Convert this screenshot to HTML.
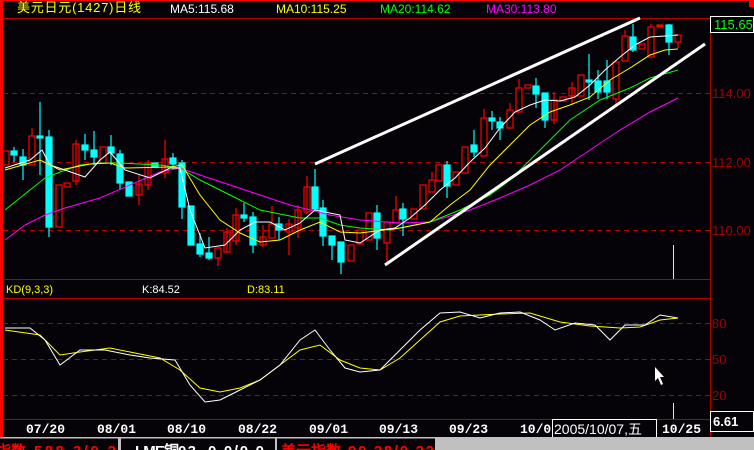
<!DOCTYPE html>
<html><head><meta charset="utf-8"><style>
html,body{margin:0;padding:0;background:#050308;width:754px;height:450px;overflow:hidden}
svg{display:block}
text{font-family:"Liberation Sans","WenQuanYi Zen Hei",sans-serif}
.d{font-family:"Liberation Mono","DejaVu Sans Mono",monospace;font-weight:bold;font-size:13px;fill:#fff}
.ax{fill:#a00000;font-size:13px}
</style></head><body>
<svg width="754" height="450" viewBox="0 0 754 450" xmlns="http://www.w3.org/2000/svg">
<rect width="754" height="450" fill="#050308"/>
<rect x="0" y="0" width="3" height="437" fill="#ff0000"/>
<rect x="0" y="0" width="754" height="1" fill="#ff0000"/>
<rect x="749" y="0" width="5" height="7" fill="#ff0000"/>
<line x1="3" y1="18.5" x2="754" y2="18.5" stroke="#b00000"/>
<line x1="710.5" y1="18" x2="710.5" y2="437" stroke="#b00000"/>
<line x1="3" y1="279.5" x2="710" y2="279.5" stroke="#b00000"/>
<line x1="3" y1="298.5" x2="710" y2="298.5" stroke="#b00000"/>
<line x1="3" y1="419.5" x2="710" y2="419.5" stroke="#b00000"/>
<g stroke="#b00000" stroke-dasharray="5,4">
<line x1="3" y1="93.5" x2="710" y2="93.5"/><line x1="3" y1="162.5" x2="710" y2="162.5"/><line x1="3" y1="230.5" x2="710" y2="230.5"/>
<line x1="3" y1="323.5" x2="710" y2="323.5"/><line x1="3" y1="359.5" x2="710" y2="359.5"/><line x1="3" y1="395.5" x2="710" y2="395.5"/>
</g>
<text x="17" y="12" fill="#ffff00" font-size="13" textLength="124" font-family="'Liberation Sans','WenQuanYi Zen Hei',sans-serif">美元日元(1427)日线</text>
<text x="170" y="13" fill="#ffffff" font-size="12">MA5:115.68</text>
<text x="276" y="13" fill="#ffff00" font-size="12">MA10:115.25</text>
<text x="380" y="13" fill="#00ff00" font-size="12">MA20:114.62</text>
<text x="486" y="13" fill="#ff00ff" font-size="12">MA30:113.80</text>
<rect x="710.5" y="16.5" width="43" height="16" fill="#050308" stroke="#fff"/>
<text x="714" y="29" fill="#00ff00" font-size="13">115.65</text>
<text x="712" y="98" class="ax">114.00</text>
<text x="712" y="167" class="ax">112.00</text>
<text x="712" y="235" class="ax">110.00</text>
<text x="712" y="328" class="ax">80</text>
<text x="712" y="364" class="ax">50</text>
<text x="712" y="400" class="ax">20</text>
<rect x="710.5" y="411.5" width="43" height="20" fill="#050308" stroke="#fff"/>
<text x="713" y="426" fill="#fff" font-size="13" font-family="'Liberation Mono',monospace" font-weight="bold">6.61</text>
<text x="6" y="293" fill="#ffff00" font-size="11">KD(9,3,3)</text>
<text x="142" y="293" fill="#fff" font-size="11">K:84.52</text>
<text x="247" y="293" fill="#ffff00" font-size="11">D:83.11</text>
<g stroke-width="1.2">
<g stroke="#ff0000" fill="#050308">
<rect x="3" y="151" width="6" height="14"/><rect x="29" y="136" width="6" height="29"/><line x1="32" y1="128" x2="32" y2="136"/>
<rect x="56" y="185" width="6" height="42"/><rect x="64" y="183" width="6" height="4"/><rect x="73" y="144" width="6" height="37"/><line x1="76" y1="140" x2="76" y2="185"/>
<rect x="100" y="147" width="6" height="16"/><rect x="136" y="184" width="6" height="11"/><line x1="139" y1="175" x2="139" y2="205"/>
<rect x="145" y="163" width="6" height="22"/><line x1="148" y1="160" x2="148" y2="190"/><rect x="162" y="159" width="6" height="14"/><line x1="165" y1="140" x2="165" y2="178"/>
<rect x="215" y="248" width="6" height="10"/><line x1="218" y1="258" x2="218" y2="266"/><rect x="224" y="232" width="6" height="20"/><line x1="227" y1="228" x2="227" y2="253"/>
<rect x="233" y="215" width="6" height="26"/><line x1="236" y1="208" x2="236" y2="245"/>
<rect x="260" y="237" width="6" height="8"/><line x1="263" y1="225" x2="263" y2="247"/><rect x="269" y="224" width="6" height="14"/><line x1="272" y1="206" x2="272" y2="224"/>
<rect x="286" y="224" width="6" height="8"/><line x1="289" y1="219" x2="289" y2="255"/><rect x="295" y="210" width="6" height="18"/><line x1="298" y1="205" x2="298" y2="238"/>
<rect x="304" y="187" width="6" height="25"/><line x1="307" y1="176" x2="307" y2="214"/>
<rect x="348" y="245" width="6" height="16"/><rect x="357" y="230" width="6" height="14"/><rect x="366" y="213" width="6" height="27"/>
<rect x="384" y="222" width="6" height="21"/><line x1="387" y1="243" x2="387" y2="265"/><rect x="393" y="210" width="6" height="13"/><line x1="396" y1="196" x2="396" y2="210"/>
<rect x="411" y="209" width="6" height="10"/><rect x="420" y="185" width="6" height="24"/><rect x="429" y="180" width="6" height="12"/><line x1="432" y1="172" x2="432" y2="180"/>
<rect x="436" y="165" width="6" height="16"/><rect x="453" y="172" width="6" height="13"/><rect x="462" y="147" width="6" height="26"/>
<rect x="481" y="118" width="6" height="38"/><line x1="484" y1="109" x2="484" y2="118"/><rect x="507" y="110" width="6" height="18"/><line x1="510" y1="103" x2="510" y2="110"/>
<rect x="516" y="88" width="6" height="24"/><line x1="519" y1="79" x2="519" y2="88"/><rect x="525" y="85" width="6" height="3"/>
<rect x="551" y="100" width="6" height="20"/><line x1="554" y1="92" x2="554" y2="124"/><rect x="560" y="97" width="6" height="4"/>
<rect x="569" y="88" width="6" height="8"/><line x1="572" y1="82" x2="572" y2="105"/><rect x="578" y="75" width="6" height="21"/>
<rect x="613" y="62" width="6" height="37"/><line x1="616" y1="99" x2="616" y2="105"/><rect x="622" y="36" width="6" height="25"/><line x1="625" y1="30" x2="625" y2="36"/>
<rect x="639" y="44" width="6" height="5"/><rect x="648" y="27" width="6" height="30"/><line x1="651" y1="24" x2="651" y2="27"/>
<rect x="657" y="25" width="6" height="2" fill="#ff0000"/><rect x="675" y="35" width="6" height="7"/><line x1="678" y1="42" x2="678" y2="48"/>
</g>
<g stroke="#00ffff" fill="#00ffff">
<line x1="14" y1="147" x2="14" y2="162"/><rect x="11" y="151" width="6" height="4"/>
<line x1="23" y1="149" x2="23" y2="180"/><rect x="20" y="157" width="6" height="8"/>
<line x1="40" y1="102" x2="40" y2="175"/><rect x="37" y="136" width="6" height="2"/>
<line x1="49" y1="130" x2="49" y2="237"/><rect x="46" y="137" width="6" height="90"/>
<line x1="85" y1="134" x2="85" y2="160"/><rect x="82" y="145" width="6" height="5"/>
<line x1="94" y1="131" x2="94" y2="165"/><rect x="91" y="150" width="6" height="7"/>
<line x1="111" y1="135" x2="111" y2="165"/><rect x="108" y="147" width="6" height="6"/>
<line x1="120" y1="150" x2="120" y2="190"/><rect x="117" y="154" width="6" height="29"/>
<rect x="126" y="182" width="6" height="14"/>
<rect x="152" y="163" width="6" height="4"/>
<line x1="173" y1="153" x2="173" y2="170"/><rect x="170" y="158" width="6" height="6"/>
<line x1="182" y1="160" x2="182" y2="219"/><rect x="179" y="163" width="6" height="44"/>
<rect x="188" y="206" width="6" height="39"/>
<line x1="200" y1="233" x2="200" y2="257"/><rect x="197" y="244" width="6" height="10"/>
<line x1="209" y1="237" x2="209" y2="260"/><rect x="206" y="253" width="6" height="5"/>
<line x1="244" y1="203" x2="244" y2="222"/><rect x="241" y="215" width="6" height="3"/>
<line x1="253" y1="212" x2="253" y2="253"/><rect x="250" y="217" width="6" height="28"/>
<line x1="279" y1="217" x2="279" y2="240"/><rect x="276" y="224" width="6" height="6"/>
<line x1="315" y1="169" x2="315" y2="210"/><rect x="312" y="187" width="6" height="22"/>
<line x1="323" y1="200" x2="323" y2="246"/><rect x="320" y="208" width="6" height="28"/>
<line x1="332" y1="236" x2="332" y2="260"/><rect x="329" y="236" width="6" height="9"/>
<line x1="341" y1="242" x2="341" y2="274"/><rect x="338" y="242" width="6" height="20"/>
<line x1="377" y1="205" x2="377" y2="250"/><rect x="374" y="213" width="6" height="25"/>
<line x1="403" y1="203" x2="403" y2="236"/><rect x="400" y="209" width="6" height="10"/>
<line x1="447" y1="161" x2="447" y2="198"/><rect x="444" y="165" width="6" height="21"/>
<line x1="474" y1="130" x2="474" y2="157"/><rect x="471" y="145" width="6" height="7"/>
<line x1="492" y1="111" x2="492" y2="130"/><rect x="489" y="118" width="6" height="3"/>
<line x1="500" y1="117" x2="500" y2="140"/><rect x="497" y="122" width="6" height="6"/>
<line x1="536" y1="78" x2="536" y2="108"/><rect x="533" y="86" width="6" height="8"/>
<line x1="545" y1="93" x2="545" y2="128"/><rect x="542" y="93" width="6" height="27"/>
<line x1="589" y1="54" x2="589" y2="100"/><rect x="586" y="80" width="6" height="2"/>
<line x1="598" y1="70" x2="598" y2="99"/><rect x="595" y="81" width="6" height="11"/>
<line x1="607" y1="60" x2="607" y2="99"/><rect x="604" y="81" width="6" height="11"/>
<line x1="633" y1="24" x2="633" y2="52"/><rect x="630" y="37" width="6" height="13"/>
<line x1="669" y1="24" x2="669" y2="55"/><rect x="666" y="25" width="6" height="17"/>
</g>
</g>
<g fill="none" stroke-width="1">
<polyline stroke="#ff00ff" points="5,240 25,225 45,215 65,208 100,198 130,185 160,172 180,168 200,175 230,185 260,195 290,205 330,215 360,220 400,223 430,222 470,210 500,198 530,185 560,170 590,150 620,130 650,112 678,98"/>
<polyline stroke="#00ff00" points="5,210 30,190 45,178 60,172 80,165 100,163 120,163 160,165 180,168 200,180 220,190 240,200 260,210 300,218 320,218 340,225 360,228 390,230 430,222 460,210 490,195 510,180 530,160 550,140 570,120 600,100 630,88 650,78 678,70"/>
<polyline stroke="#ffff00" points="5,170 40,160 60,170 90,164 110,163 125,168 170,167 182,165 200,195 220,220 240,233 260,242 280,240 300,230 320,222 340,232 360,233 400,228 430,222 450,205 470,190 490,165 510,145 530,125 550,112 570,105 590,97 610,80 630,68 650,55 665,50 678,49"/>
<polyline stroke="#ffffff" points="5,168 30,160 42,150 50,165 65,170 85,177 100,160 110,152 125,170 150,178 170,168 180,168 190,210 205,248 225,245 240,230 255,222 270,222 285,230 300,223 315,210 340,215 345,240 360,243 380,230 395,228 410,218 425,205 440,190 455,178 470,162 485,148 500,128 515,112 530,105 545,100 560,101 575,97 590,85 605,70 620,57 635,45 650,37 665,36 678,35"/>
</g>
<line x1="315" y1="164" x2="640" y2="18" stroke="#fff" stroke-width="3"/>
<line x1="385" y1="265" x2="705" y2="44" stroke="#fff" stroke-width="3"/>
<line x1="673.5" y1="245" x2="673.5" y2="279" stroke="#ffff00"/>
<line x1="673.5" y1="403" x2="673.5" y2="419" stroke="#ffff00"/>
<g fill="none">
<polyline stroke="#ffff00" points="5,330 40,335 60,355 80,352 110,348 130,352 160,358 180,370 200,388 220,392 240,388 260,380 280,365 300,350 320,345 340,360 360,368 380,370 400,358 420,340 440,322 460,316 480,315 500,314 530,313 560,322 590,326 620,328 640,327 660,320 678,318"/>
<polyline stroke="#ffffff" points="5,328 30,328 45,340 60,365 80,350 105,350 130,355 150,358 175,360 190,385 205,402 220,400 240,390 260,380 280,365 300,340 315,330 330,350 345,368 360,372 380,370 400,350 420,330 440,313 460,312 480,318 500,313 520,312 540,320 555,330 575,323 595,325 610,340 625,325 645,325 660,315 678,318"/>
</g>
<path d="M655,367 L655,381 L658,378 L661,385 L663,384 L660,377 L664,377 Z" fill="#fff"/>
<text x="26" y="433" class="d">07/20</text>
<text x="97" y="433" class="d">08/01</text>
<text x="167" y="433" class="d">08/10</text>
<text x="238" y="433" class="d">08/22</text>
<text x="309" y="433" class="d">09/01</text>
<text x="379" y="433" class="d">09/13</text>
<text x="449" y="433" class="d">09/23</text>
<text x="520" y="433" class="d">10/0</text>
<rect x="552.5" y="419.5" width="104" height="18" fill="#050308" stroke="#fff"/>
<text x="554" y="434" fill="#fff" font-size="14" font-family="'Liberation Sans','WenQuanYi Zen Hei',sans-serif">2005/10/07,五</text>
<text x="662" y="433" class="d">10/25</text>
<rect x="0" y="437" width="754" height="13" fill="#050308"/>
<rect x="0" y="437" width="754" height="1.5" fill="#c0c0c0"/>
<rect x="118" y="437" width="3" height="13" fill="#c0c0c0"/>
<rect x="275" y="437" width="2" height="13" fill="#c0c0c0"/>
<rect x="435" y="437" width="319" height="13" fill="#c0c0c0"/>
<g font-size="15" font-weight="bold" font-family="'Liberation Mono','WenQuanYi Zen Hei',monospace">
<text x="-4" y="456" fill="#ff0000" textLength="30">指数</text>
<text x="34" y="456" fill="#ff0000" textLength="82">588.3/0.2</text>
<text x="135" y="456" fill="#ffffff" textLength="44">LME铜</text>
<text x="178" y="456" fill="#ffffff" textLength="18">03</text>
<text x="208" y="456" fill="#ffffff" textLength="56">0.0/0.0</text>
<text x="281" y="456" fill="#ff0000" textLength="60">美元指数</text>
<text x="348" y="456" fill="#ff0000" textLength="86">90.28/0.22</text>
</g>
</svg>
</body></html>
